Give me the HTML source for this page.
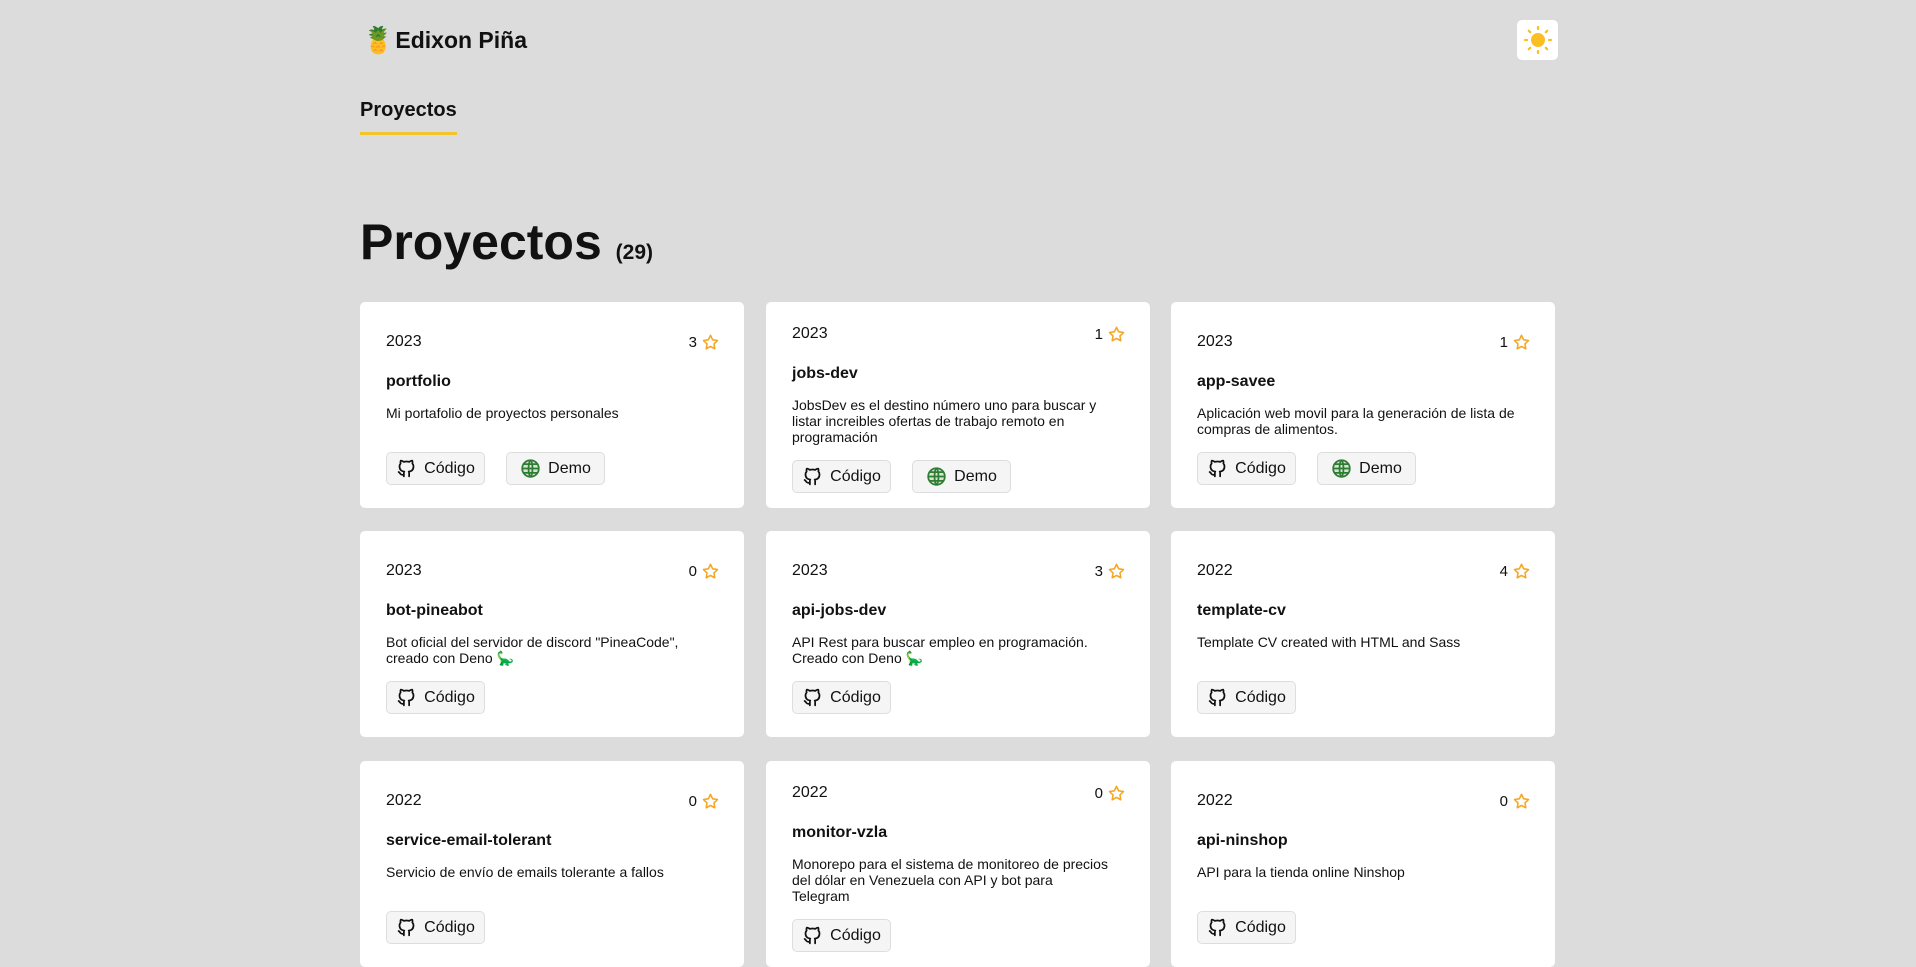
<!DOCTYPE html>
<html><head><meta charset="utf-8"><style>
*{box-sizing:border-box;margin:0;padding:0}
body{width:1916px;height:861px;overflow:hidden;background:#dcdcdc;font-family:"Liberation Sans",Arial,sans-serif;color:#111;position:relative}
.logo{position:absolute;left:362px;top:25px;font-size:23px;font-weight:bold;display:flex;align-items:center;gap:1px}
.nav{position:absolute;left:360px;top:99px;font-size:20px;font-weight:bold}
.nav:after{content:"";position:absolute;left:0;top:33px;width:97px;height:3px;background:#f2c52a}
.sun{position:absolute;left:1517px;top:20px;width:41px;height:40px;background:#fff;border-radius:5px;display:flex;align-items:center;justify-content:center}
h1{position:absolute;left:360px;top:213px;font-size:50px;font-weight:bold}
h1 small{font-size:21px}
.card{position:absolute;width:384px;height:206px;background:#fff;border-radius:5px;padding:7px 24px 0 26px;display:flex;flex-direction:column;justify-content:center}
.top{display:flex;justify-content:space-between;align-items:center;height:20px;font-size:16px}
.st{display:flex;align-items:center;gap:4px;font-size:15px}
.t{margin-top:20px;font-weight:bold;font-size:16px;line-height:20px}
.d{margin-top:13px;font-size:14px;line-height:16px;min-height:32px}
.b{margin-top:15px;display:flex;gap:21px;height:33px}
.btn{width:99px;height:33px;background:#f5f5f5;border:1px solid #ddd;border-radius:5px;display:flex;align-items:center;justify-content:center;gap:7px;font-size:16px}
</style></head><body>
<div class="logo"><span style="font-size:26px;line-height:30px">🍍</span>Edixon Piña</div>
<div class="nav">Proyectos</div>
<div class="sun"><svg width="30" height="30" viewBox="0 0 30 30"><circle cx="15" cy="15" r="7" fill="#fbbf24"/><g stroke="#fbbf24" stroke-width="2.2" stroke-linecap="round"><path d="M15 2v2M15 26v2M2 15h2M26 15h2M5.8 5.8l1.4 1.4M22.8 22.8l1.4 1.4M5.8 24.2l1.4-1.4M22.8 7.2l1.4-1.4"/></g></svg></div>
<h1>Proyectos <small>(29)</small></h1>

<svg width="0" height="0" style="position:absolute"><defs>
<symbol id="star" viewBox="0 0 24 24"><path d="M12 3l2.7 5.6 6.1.9-4.4 4.3 1 6.1L12 17l-5.4 2.9 1-6.1L3.2 9.5l6.1-.9z" fill="none" stroke="#f5a623" stroke-width="2" stroke-linejoin="round"/></symbol>
<symbol id="gh" viewBox="0 0 24 24"><path d="M9 19c-4.3 1.4-4.3-2.5-6-3m12 5v-3.5c0-1 .1-1.4-.5-2 2.8-.3 5.5-1.4 5.5-6a4.6 4.6 0 0 0-1.3-3.2 4.2 4.2 0 0 0-.1-3.2s-1.1-.3-3.5 1.3a12.3 12.3 0 0 0-6.2 0C6.5 2.8 5.4 3.1 5.4 3.1a4.2 4.2 0 0 0-.1 3.2A4.6 4.6 0 0 0 4 9.5c0 4.6 2.7 5.7 5.5 6-.6.6-.6 1.2-.5 2V21" fill="none" stroke="#111" stroke-width="2" stroke-linecap="round" stroke-linejoin="round"/></symbol>
<symbol id="gl" viewBox="0 0 24 24"><g fill="none" stroke="#2e7d32" stroke-width="2"><circle cx="12" cy="12" r="9.5" fill="#2e7d32" fill-opacity=".15"/><path d="M2.5 12h19M12 2.5c3 3 3 16 0 19M12 2.5c-3 3-3 16 0 19M4 7h16M4 17h16"/></g></symbol>
</defs></svg>

<div class="card" style="left:360px;top:302px"><div class="top"><span>2023</span><span class="st">3<svg width="19" height="19"><use href="#star"/></svg></span></div><div class="t">portfolio</div><div class="d">Mi portafolio de proyectos personales</div><div class="b"><div class="btn"><svg width="21" height="21"><use href="#gh"/></svg>Código</div><div class="btn"><svg width="21" height="21"><use href="#gl"/></svg>Demo</div></div></div>

<div class="card" style="left:766px;top:302px"><div class="top"><span>2023</span><span class="st">1<svg width="19" height="19"><use href="#star"/></svg></span></div><div class="t">jobs-dev</div><div class="d">JobsDev es el destino número uno para buscar y<br>listar increibles ofertas de trabajo remoto en<br>programación</div><div class="b"><div class="btn"><svg width="21" height="21"><use href="#gh"/></svg>Código</div><div class="btn"><svg width="21" height="21"><use href="#gl"/></svg>Demo</div></div></div>

<div class="card" style="left:1171px;top:302px"><div class="top"><span>2023</span><span class="st">1<svg width="19" height="19"><use href="#star"/></svg></span></div><div class="t">app-savee</div><div class="d">Aplicación web movil para la generación de lista de<br>compras de alimentos.</div><div class="b"><div class="btn"><svg width="21" height="21"><use href="#gh"/></svg>Código</div><div class="btn"><svg width="21" height="21"><use href="#gl"/></svg>Demo</div></div></div>

<div class="card" style="left:360px;top:531px"><div class="top"><span>2023</span><span class="st">0<svg width="19" height="19"><use href="#star"/></svg></span></div><div class="t">bot-pineabot</div><div class="d">Bot oficial del servidor de discord "PineaCode",<br>creado con Deno 🦕</div><div class="b"><div class="btn"><svg width="21" height="21"><use href="#gh"/></svg>Código</div></div></div>

<div class="card" style="left:766px;top:531px"><div class="top"><span>2023</span><span class="st">3<svg width="19" height="19"><use href="#star"/></svg></span></div><div class="t">api-jobs-dev</div><div class="d">API Rest para buscar empleo en programación.<br>Creado con Deno 🦕</div><div class="b"><div class="btn"><svg width="21" height="21"><use href="#gh"/></svg>Código</div></div></div>

<div class="card" style="left:1171px;top:531px"><div class="top"><span>2022</span><span class="st">4<svg width="19" height="19"><use href="#star"/></svg></span></div><div class="t">template-cv</div><div class="d">Template CV created with HTML and Sass</div><div class="b"><div class="btn"><svg width="21" height="21"><use href="#gh"/></svg>Código</div></div></div>

<div class="card" style="left:360px;top:761px"><div class="top"><span>2022</span><span class="st">0<svg width="19" height="19"><use href="#star"/></svg></span></div><div class="t">service-email-tolerant</div><div class="d">Servicio de envío de emails tolerante a fallos</div><div class="b"><div class="btn"><svg width="21" height="21"><use href="#gh"/></svg>Código</div></div></div>

<div class="card" style="left:766px;top:761px"><div class="top"><span>2022</span><span class="st">0<svg width="19" height="19"><use href="#star"/></svg></span></div><div class="t">monitor-vzla</div><div class="d">Monorepo para el sistema de monitoreo de precios<br>del dólar en Venezuela con API y bot para<br>Telegram</div><div class="b"><div class="btn"><svg width="21" height="21"><use href="#gh"/></svg>Código</div></div></div>

<div class="card" style="left:1171px;top:761px"><div class="top"><span>2022</span><span class="st">0<svg width="19" height="19"><use href="#star"/></svg></span></div><div class="t">api-ninshop</div><div class="d">API para la tienda online Ninshop</div><div class="b"><div class="btn"><svg width="21" height="21"><use href="#gh"/></svg>Código</div></div></div>
</body></html>
